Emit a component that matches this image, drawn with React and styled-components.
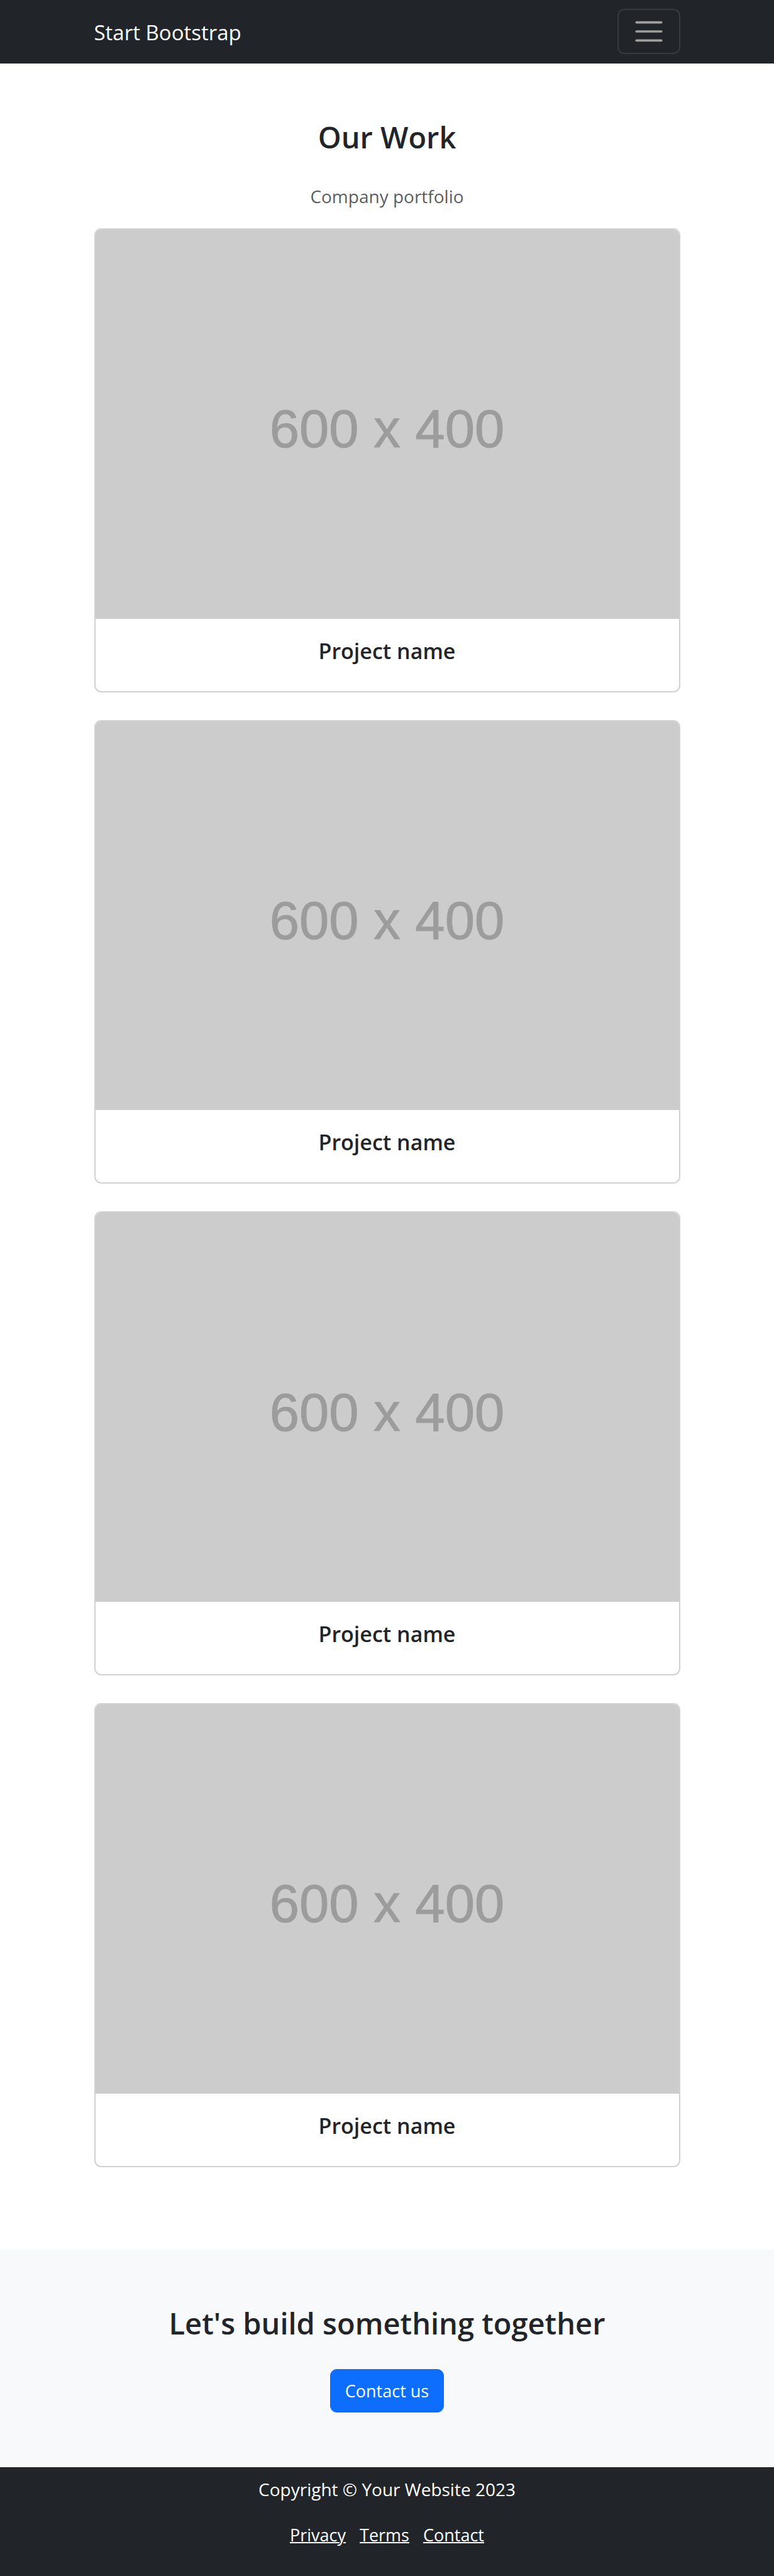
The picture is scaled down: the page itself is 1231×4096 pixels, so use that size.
import React from "react";
import styled, { createGlobalStyle } from "styled-components";

const GlobalStyle = createGlobalStyle`
  *, *::before, *::after { box-sizing: border-box; }
  body {
    margin: 0;
    background: #fff;
    color: #212529;
    font-family: "Open Sans", "Noto Sans", sans-serif;
    font-size: 28px;
    line-height: 43px;
  }
`;

const Container = styled.div`
  width: 100%;
  max-width: 932px;
  margin: 0 auto;
`;

const Navbar = styled.nav`
  padding: 14px 0 15px;
  background: #212529;
`;

const NavRow = styled(Container)`
  display: flex;
  align-items: center;
  justify-content: space-between;
`;

const Brand = styled.a`
  padding-top: 4px;
  color: #fff;
  font-size: 33px;
  line-height: 54px;
  text-decoration: none;
`;

const Toggler = styled.button`
  display: flex;
  padding: 7px 21px;
  background: transparent;
  border: 2px solid rgba(255, 255, 255, 0.1);
  border-radius: 11px;
`;

const TogglerIcon = styled.svg`
  width: 54px;
  height: 54px;
  stroke: #a0a0a0;
  stroke-width: 2;
  stroke-linecap: round;
`;

const Section = styled.section`
  padding: 87px 0;
  background: ${(p) => (p.$light ? "#f8f9fa" : "#fff")};
  text-align: center;
`;

const Heading = styled.h2`
  margin: 0 0 43px;
  font-size: 47px;
  font-weight: 600;
  line-height: 60px;
`;

const Lead = styled.p`
  margin: 0 0 29px;
  color: rgba(33, 37, 41, 0.75);
`;

const CardList = styled.div`
  display: grid;
  gap: 44px;
  padding-bottom: 44px;
`;

const Card = styled.article`
  overflow: hidden;
  background: #fff;
  border: 2px solid #d2d2d2;
  border-radius: 11px;
`;

const Placeholder = styled.div`
  display: flex;
  align-items: center;
  justify-content: center;
  aspect-ratio: 3 / 2;
  padding-top: 16px;
  background: #ccc;
  color: #9c9c9c;
  font-family: "Liberation Sans", Arial, sans-serif;
  font-size: 85px;
  line-height: 96px;
  -webkit-text-stroke: 1px #9c9c9c;
`;

const CardBody = styled.div`
  padding: 30px 29px 42px;
`;

const CardTitle = styled.h4`
  margin: 0;
  font-size: 34px;
  font-weight: 600;
  line-height: 43px;
`;

const PrimaryButton = styled.button`
  display: block;
  margin: 0 auto;
  padding: 11px 22px;
  background: #0d6efd;
  border: 2px solid #0d6efd;
  border-radius: 11px;
  color: #fff;
  font: inherit;
  font-size: 27px;
`;

const Footer = styled.footer`
  padding: 14px 0 44px;
  background: #212529;
  color: #fff;
  text-align: center;
`;

const Copyright = styled.p`
  margin: 0 0 29px;
`;

const FooterLinks = styled.div`
  display: flex;
  justify-content: center;
  gap: 22px;
  font-size: 27px;
`;

const FooterLink = styled.a`
  color: #fff;
  text-decoration: underline;
  text-decoration-thickness: 2px;
`;

const projects = [1, 2, 3, 4];
const links = ["Privacy", "Terms", "Contact"];

export default function App() {
  return (
    <>
      <GlobalStyle />
      <Navbar>
        <NavRow>
          <Brand href="#">Start Bootstrap</Brand>
          <Toggler type="button" aria-label="Toggle navigation">
            <TogglerIcon viewBox="0 0 30 30" fill="none" aria-hidden="true">
              <path d="M4 7h22M4 15h22M4 23h22" />
            </TogglerIcon>
          </Toggler>
        </NavRow>
      </Navbar>
      <main>
        <Section>
          <Container>
            <Heading>Our Work</Heading>
            <Lead>Company portfolio</Lead>
            <CardList>
              {projects.map((id) => (
                <Card key={id}>
                  <Placeholder>600 x 400</Placeholder>
                  <CardBody>
                    <CardTitle>Project name</CardTitle>
                  </CardBody>
                </Card>
              ))}
            </CardList>
          </Container>
        </Section>
        <Section $light>
          <Container>
            <Heading>Let's build something together</Heading>
            <PrimaryButton type="button">Contact us</PrimaryButton>
          </Container>
        </Section>
      </main>
      <Footer>
        <Copyright>Copyright © Your Website 2023</Copyright>
        <FooterLinks>
          {links.map((label) => (
            <FooterLink key={label} href="#">
              {label}
            </FooterLink>
          ))}
        </FooterLinks>
      </Footer>
    </>
  );
}
